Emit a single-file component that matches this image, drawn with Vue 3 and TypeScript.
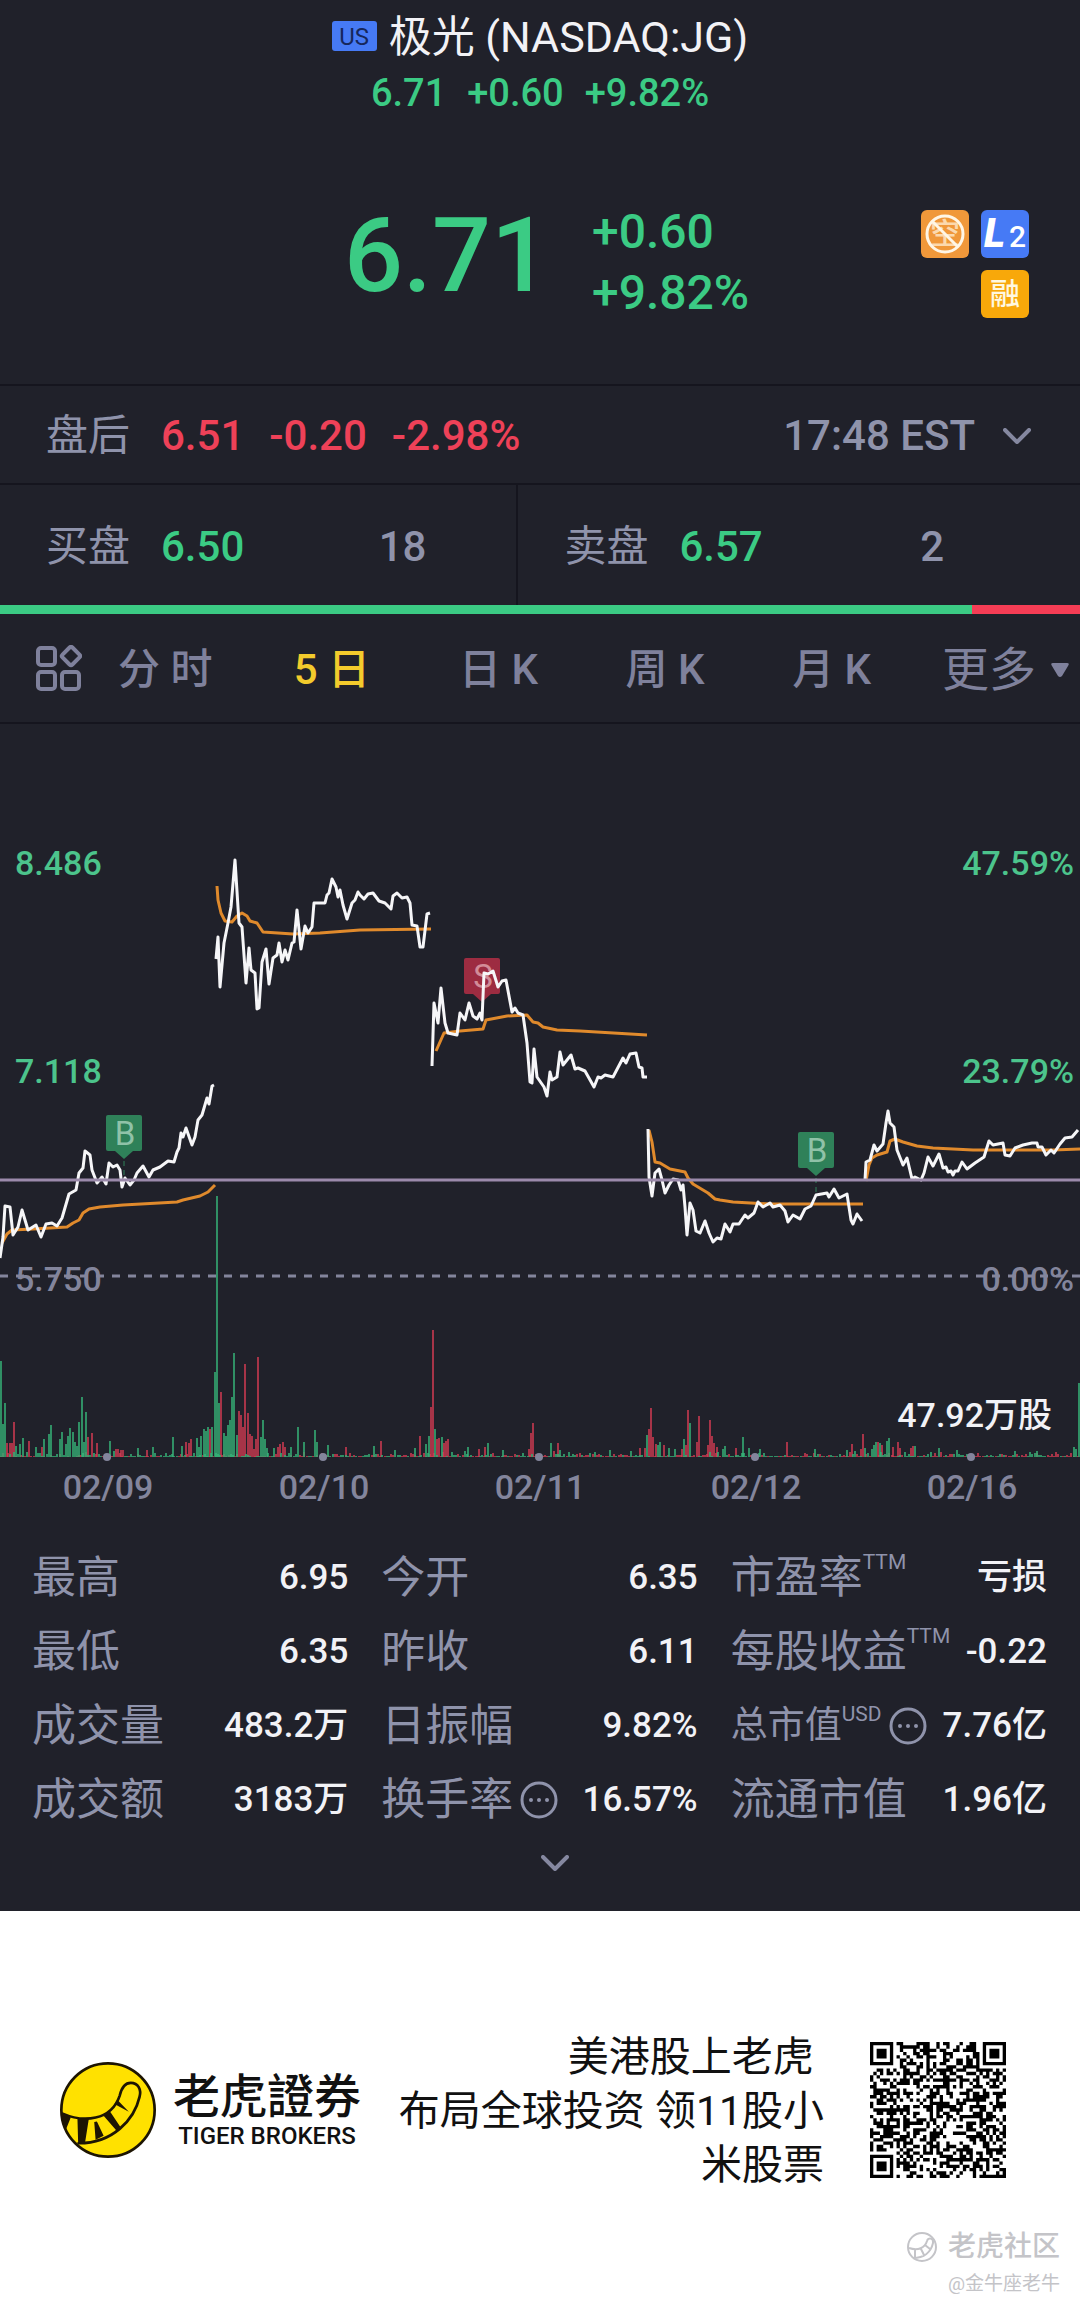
<script setup lang="ts">
type Point = [number, number]
type Tone = 'g' | 'r'

interface Stat {
  label: string
  value: string
  sup?: string
  info?: boolean
  small?: boolean
}

const tabs = ['分 时', '5 日', '日 K', '周 K', '月 K']
const activeTab = '5 日'

const stats: Stat[] = [
  { label: '最高', value: '6.95' },
  { label: '今开', value: '6.35' },
  { label: '市盈率', value: '亏损', sup: 'TTM' },
  { label: '最低', value: '6.35' },
  { label: '昨收', value: '6.11' },
  { label: '每股收益', value: '-0.22', sup: 'TTM' },
  { label: '成交量', value: '483.2万' },
  { label: '日振幅', value: '9.82%' },
  { label: '总市值', value: '7.76亿', sup: 'USD', info: true, small: true },
  { label: '成交额', value: '3183万' },
  { label: '换手率', value: '16.57%', info: true },
  { label: '流通市值', value: '1.96亿' },
]

const days = [
  { date: '02/09', x: 108 },
  { date: '02/10', x: 324 },
  { date: '02/11', x: 540 },
  { date: '02/12', x: 756 },
  { date: '02/16', x: 972 },
]

const priceLines: string[] = [
  '0,1258 3,1237 5,1206 10,1207 13,1235 18,1227 22,1210 28,1230 36,1225 41,1237 46,1224 52,1223 57,1226 62,1218 69,1194 76,1190 79,1173 83,1168 85,1151 90,1155 92,1170 97,1183 102,1177 106,1184 109,1163 113,1167 117,1165 120,1170 122,1187 125,1178 130,1185 134,1180 137,1173 143,1166 149,1177 153,1170 160,1167 168,1161 174,1162 177,1152 179,1148 181,1133 183,1137 186,1128 192,1145 195,1137 198,1120 202,1115 207,1098 209,1104 212,1086 214,1085',
  '216,959 218,937 220,987 224,943 228,923 231,907 235,860 239,923 242,927 246,983 249,948 251,970 255,973 257,1009 259,1008 262,962 266,949 269,984 273,958 277,955 279,943 282,962 285,950 288,960 292,943 294,942 297,910 301,949 305,926 308,933 312,927 314,903 325,903 327,895 329,893 332,879 336,887 338,897 340,890 343,905 347,919 352,903 355,900 358,892 360,895 364,899 368,894 373,893 379,901 385,903 391,909 393,896 397,893 402,898 407,897 410,903 412,925 417,926 420,947 423,947 427,914 430,913',
  '432,1066 434,1003 438,1023 441,988 445,1023 448,1033 457,1035 460,1013 465,1020 469,1003 473,1016 477,1019 480,1013 482,1020 484,973 488,974 493,971 498,987 502,981 506,980 512,1012 515,1008 518,1013 523,1015 527,1043 530,1082 532,1083 534,1049 537,1077 544,1087 547,1096 550,1072 552,1080 557,1077 560,1052 563,1065 571,1055 575,1069 578,1068 585,1071 594,1087 598,1077 601,1078 605,1075 613,1077 623,1058 626,1063 630,1054 636,1053 639,1067 642,1068 643,1077 647,1077',
  '648,1129 649,1177 652,1196 655,1173 659,1169 662,1180 665,1193 669,1185 673,1179 678,1180 681,1190 683,1185 685,1207 687,1235 690,1203 693,1210 696,1231 700,1233 705,1221 709,1233 713,1242 717,1238 721,1239 725,1224 730,1232 733,1224 739,1224 745,1215 748,1218 754,1213 758,1202 763,1207 770,1203 773,1207 780,1205 785,1211 788,1222 793,1215 800,1219 805,1209 811,1206 816,1195 827,1193 829,1197 834,1189 839,1198 847,1194 851,1220 853,1224 857,1214 862,1221',
  '865,1180 866,1162 870,1160 874,1145 877,1151 883,1144 886,1123 888,1111 890,1123 894,1127 897,1150 903,1165 907,1158 912,1179 915,1177 921,1180 924,1173 928,1157 933,1166 939,1154 943,1168 946,1167 948,1172 951,1171 953,1175 955,1171 958,1171 962,1162 967,1169 975,1163 984,1157 989,1141 993,1145 1003,1143 1005,1155 1010,1156 1015,1148 1023,1145 1032,1143 1037,1143 1038,1147 1042,1147 1046,1155 1051,1150 1054,1153 1060,1144 1065,1138 1072,1137 1078,1130',
]

const averageLines: string[] = [
  '2,1243 7,1234 12,1230 33,1229 67,1227 73,1223 79,1220 83,1213 89,1209 100,1207 123,1205 177,1202 183,1200 200,1196 208,1192 215,1185',
  '217,886 218,900 221,913 225,921 232,922 237,916 242,913 247,916 250,921 257,923 263,932 293,934 320,933 360,930 431,929',
  '436,1051 440,1042 444,1033 460,1031 483,1029 486,1020 507,1016 527,1015 533,1022 538,1023 543,1027 557,1030 580,1031 647,1035',
  '649,1130 652,1142 655,1162 660,1163 670,1169 685,1172 688,1178 693,1184 708,1193 715,1199 720,1200 733,1202 770,1204 863,1204',
  '866,1181 869,1165 872,1158 877,1155 887,1152 890,1141 895,1139 903,1142 917,1146 933,1148 973,1150 1053,1150 1080,1149',
]

const markers = [
  { letter: 'B', x: 124, y: 1115, to: 1180, kind: 'buy' },
  { letter: 'S', x: 482, y: 958, to: 1003, kind: 'sell' },
  { letter: 'B', x: 816, y: 1132, to: 1195, kind: 'buy' },
]

const baseline = 1457
const greenBars: Point[] = [
  [1, 95], [3, 32], [5, 53], [16, 10], [20, 12], [23, 18], [36, 9], [44, 17], [49, 22], [51, 31], [60, 17], [62, 24], [66, 12], [68, 20], [70, 28], [73, 24], [75, 14], [77, 10], [79, 34], [82, 59], [84, 14], [86, 44], [110, 15], [138, 8], [153, 9], [173, 19], [182, 10], [197, 18], [199, 9], [201, 20], [204, 27], [206, 25], [208, 29], [212, 29], [215, 84], [217, 260], [219, 53], [224, 23], [226, 20], [228, 31], [230, 36], [232, 59], [234, 103], [237, 21], [261, 19], [263, 36], [265, 17], [267, 8], [274, 8], [291, 9], [298, 29], [304, 14], [315, 26], [317, 14], [328, 11], [374, 10], [395, 6], [415, 8], [426, 12], [429, 20], [435, 27], [442, 19], [468, 9], [488, 13], [503, 6], [551, 13], [560, 6], [610, 6], [631, 5], [647, 21], [658, 11], [660, 14], [669, 8], [675, 7], [684, 17], [690, 33], [723, 7], [725, 10], [743, 19], [749, 8], [760, 7], [815, 7], [847, 6], [865, 8], [872, 7], [874, 11], [876, 14], [880, 13], [887, 15], [889, 18], [915, 10], [939, 8], [957, 6], [1037, 5], [1074, 9], [1076, 7], [1079, 73],
]
const redBars: Point[] = [
  [7, 13], [10, 13], [12, 13], [14, 34], [29, 15], [42, 9], [88, 19], [92, 23], [97, 13], [116, 7], [118, 7], [121, 6], [123, 6], [147, 6], [186, 14], [189, 13], [191, 17], [210, 27], [221, 64], [239, 45], [241, 41], [243, 29], [245, 92], [248, 43], [250, 22], [252, 20], [254, 7], [256, 17], [258, 99], [278, 9], [280, 12], [283, 14], [285, 9], [346, 9], [381, 15], [420, 20], [431, 49], [433, 126], [437, 17], [439, 18], [444, 13], [446, 15], [448, 17], [479, 7], [485, 9], [529, 7], [531, 23], [533, 33], [558, 13], [640, 8], [645, 8], [649, 27], [651, 48], [653, 19], [656, 12], [664, 11], [682, 7], [686, 11], [688, 46], [697, 14], [699, 40], [708, 11], [710, 36], [712, 20], [714, 13], [717, 9], [736, 8], [787, 14], [852, 12], [861, 7], [863, 22], [878, 14], [882, 11], [893, 9], [898, 14], [900, 8], [911, 8], [913, 10],
]

function barPath(bars: Point[]): string {
  return bars.map(([x, h]) => `M${x} ${baseline}V${baseline - h - 1}`).join('')
}

function noise(seed: number): () => number {
  let s = seed
  return () => {
    s = (s * 16807) % 2147483647
    return s / 2147483647
  }
}

// Quiet minutes between the larger trades
const rand = noise(912)
const quiet: Record<Tone, Point[]> = { g: [], r: [] }
for (let i = 0; i < 498; i++) {
  const tone: Tone = rand() > 0.5 ? 'g' : 'r'
  quiet[tone].push([Math.round(i * 2.167) + 1, Math.floor(rand() * rand() * 6)])
}
const greenPath = barPath([...greenBars, ...quiet.g])
const redPath = barPath([...redBars, ...quiet.r])

// QR code grid: three finder squares and the data modules
const qrSize = 41
function finder(x: number, y: number): boolean | null {
  for (const [fx, fy] of [[0, 0], [qrSize - 7, 0], [0, qrSize - 7]]) {
    const dx = x - fx
    const dy = y - fy
    if (dx >= -1 && dx <= 7 && dy >= -1 && dy <= 7) {
      const ring = Math.max(Math.abs(dx - 3), Math.abs(dy - 3))
      return ring === 3 || ring <= 1
    }
  }
  return null
}
const qrRand = noise(7351)
let qrPath = ''
for (let y = 0; y < qrSize; y++) {
  for (let x = 0; x < qrSize; x++) {
    const dark = qrRand() > 0.5
    if (finder(x, y) ?? dark) qrPath += `M${x} ${y}h1v1h-1z`
  }
}
</script>

<template>
  <div class="page">
    <main class="quote">
      <header class="head">
        <h1 class="title"><span class="market">US</span>极光 (NASDAQ:JG)</h1>
        <p class="mini up"><span>6.71</span><span>+0.60</span><span>+9.82%</span></p>
      </header>

      <section class="price">
        <strong class="last up">6.71</strong>
        <p class="change up"><span>+0.60</span><span>+9.82%</span></p>
        <div class="badges">
          <span class="badge noshort">
            <span class="badge-text">空</span>
            <svg viewBox="0 0 48 48" aria-hidden="true">
              <circle cx="24" cy="24" r="18" />
              <path d="M11 11L37 37" />
            </svg>
          </span>
          <span class="badge level"><i>L</i><b>2</b></span>
          <span class="badge margin">融</span>
        </div>
      </section>

      <section class="after">
        <span class="tag">盘后</span>
        <span class="down nums"><span>6.51</span><span>-0.20</span><span>-2.98%</span></span>
        <button class="time" type="button">
          17:48 EST
          <svg class="chev" viewBox="0 0 28 16" aria-hidden="true"><path d="M2 2L14 14L26 2" /></svg>
        </button>
      </section>

      <section class="book">
        <div class="side bid">
          <span class="tag">买盘</span><span class="up">6.50</span><span class="qty">18</span>
        </div>
        <div class="side ask">
          <span class="tag">卖盘</span><span class="up">6.57</span><span class="qty">2</span>
        </div>
      </section>
      <div class="ratio"><span class="ratio-bid"></span><span class="ratio-ask"></span></div>

      <nav class="tabs">
        <button class="grid-btn" type="button" aria-label="图表">
          <svg viewBox="0 0 46 46" aria-hidden="true">
            <rect x="2" y="3" width="17" height="17" rx="3" />
            <rect x="2" y="27" width="17" height="17" rx="3" />
            <rect x="26" y="27" width="17" height="17" rx="3" />
            <rect x="28" y="4" width="14" height="14" rx="2" transform="rotate(45 35 11)" />
          </svg>
        </button>
        <button
          v-for="t in tabs"
          :key="t"
          type="button"
          class="tab"
          :class="{ active: t === activeTab }"
        >{{ t }}</button>
        <button class="more" type="button">
          更多
          <svg viewBox="0 0 20 16" aria-hidden="true"><path d="M3 1H17Q20 1 18 4L12 14Q10 16 8 14L2 4Q0 1 3 1Z" /></svg>
        </button>
      </nav>

      <svg class="chart" viewBox="0 724 1080 806" role="img" aria-label="5日走势">
        <g v-for="m in markers" :key="m.x" :class="m.kind">
          <path class="lead" :d="`M${m.x} ${m.y + 46}V${m.to}`" />
          <rect :x="m.x - 18" :y="m.y" width="36" height="36" rx="2" />
          <path class="tip" :d="`M${m.x - 9} ${m.y + 36}h18l-9 8z`" />
          <text :x="m.x + 1" :y="m.y + 30" text-anchor="middle">{{ m.letter }}</text>
        </g>

        <polyline v-for="(l, i) in averageLines" :key="'a' + i" class="avg" :points="l" />
        <polyline v-for="(l, i) in priceLines" :key="'p' + i" class="line" :points="l" />
        <path class="cost" d="M0 1180H1080" />
        <path class="zero" d="M0 1276H1080" />

        <path class="bars red" :d="redPath" />
        <path class="bars green" :d="greenPath" />

        <g class="axis up-fill">
          <text x="15" y="875">8.486</text>
          <text x="15" y="1083">7.118</text>
          <text x="1074" y="875" text-anchor="end">47.59%</text>
          <text x="1074" y="1083" text-anchor="end">23.79%</text>
        </g>
        <g class="axis muted-fill">
          <text x="15" y="1291">5.750</text>
          <text x="1074" y="1291" text-anchor="end">0.00%</text>
          <template v-for="d in days" :key="d.date">
            <circle :cx="d.x - 1" cy="1457" r="4" />
            <text :x="d.x" y="1499" text-anchor="middle">{{ d.date }}</text>
          </template>
        </g>
        <text class="axis volume" x="1052" y="1427" text-anchor="end">47.92万股</text>
      </svg>

      <dl class="stats">
        <div v-for="s in stats" :key="s.label" class="stat">
          <dt :class="{ small: s.small }">
            {{ s.label }}<sup v-if="s.sup">{{ s.sup }}</sup>
            <svg v-if="s.info" class="info" viewBox="0 0 38 38" aria-hidden="true">
              <circle class="ring" cx="19" cy="19" r="17" />
              <circle cx="11" cy="19" r="2" /><circle cx="19" cy="19" r="2" /><circle cx="27" cy="19" r="2" />
            </svg>
          </dt>
          <dd>{{ s.value }}</dd>
        </div>
      </dl>
      <button class="expand" type="button" aria-label="展开">
        <svg class="chev" viewBox="0 0 28 16" aria-hidden="true"><path d="M2 2L14 14L26 2" /></svg>
      </button>
    </main>

    <footer class="foot">
      <div class="brand">
        <svg class="logo" viewBox="60 122 286 286" aria-hidden="true">
          <circle cx="203" cy="265" r="139" fill="#ffe100" stroke="#1d1503" stroke-width="8" />
          <path d="M66 275C130 303 212 298 238 222C243 200 252 184 271 184C293 184 303 204 297 226C282 292 218 366 112 364" fill="none" stroke="#1d1503" stroke-width="8" />
          <path d="M66 272L92 287L78 322L70 312ZM112 290H146L134 366L114 362ZM162 301L170 299L190 342L166 354ZM188 280L208 268L240 316L228 326ZM222 247L232 236L265 270Z" fill="#1d1503" />
        </svg>
        <p class="brand-text"><strong>老虎證券</strong><span>TIGER BROKERS</span></p>
      </div>
      <p class="slogan">美港股上老虎&nbsp;<br />布局全球投资 领11股小<br />米股票</p>
      <svg class="qr" :viewBox="`0 0 ${qrSize} ${qrSize}`" role="img" aria-label="二维码">
        <path :d="qrPath" />
      </svg>
      <div class="mark">
        <p class="mark-name">
          <svg viewBox="0 0 32 32" aria-hidden="true">
            <circle cx="16" cy="16" r="14" />
            <path d="M3 17C12 20 19 17 21 10C22 6 28 7 27 12C25 21 18 27 7 27M9 19V27M15 18L18 24M19 14L24 18" />
          </svg>
          老虎社区
        </p>
        <p class="mark-user">@金牛座老牛</p>
      </div>
    </footer>
  </div>
</template>

<style>
body {
  margin: 0;
  background: #fff;
}
</style>

<style scoped>
.page {
  font-family: Roboto, "Noto Sans CJK SC", sans-serif;
  line-height: 1.2;
  color: #f2f2f6;
}
p,
h1,
dl,
dd {
  margin: 0;
}
button {
  font: inherit;
  color: inherit;
  background: none;
  border: 0;
  padding: 0;
}
.quote {
  background: #20212a;
}
.up {
  color: #3bcb84;
}
.down {
  color: #ee4158;
}

.head {
  padding-top: 8px;
  text-align: center;
}
.title {
  display: flex;
  justify-content: center;
  align-items: center;
  gap: 12px;
  height: 60px;
  font-size: 43px;
  font-weight: 400;
}
.market {
  width: 45px;
  height: 30px;
  margin-bottom: 4px;
  border-radius: 3px;
  background: #467af5;
  color: #16275c;
  font-size: 24px;
  line-height: 32px;
}
.mini {
  display: flex;
  justify-content: center;
  gap: 21px;
  font-size: 38px;
  font-weight: 500;
  line-height: 50px;
}

.price {
  display: flex;
  align-items: center;
  height: 244px;
  padding: 22px 51px 0 344px;
  border-bottom: 2px solid #15151e;
}
.last {
  width: 248px;
  margin-bottom: 12px;
  font-size: 104px;
  font-weight: 500;
}
.change {
  display: flex;
  flex-direction: column;
  font-size: 48px;
  font-weight: 500;
  line-height: 61px;
}
.badges {
  display: grid;
  grid-template-columns: 48px 48px;
  gap: 12px;
  margin-left: auto;
  padding-top: 4px;
}
.badge {
  position: relative;
  display: flex;
  align-items: center;
  justify-content: center;
  height: 48px;
  border-radius: 6px;
  font-size: 30px;
  font-weight: 500;
}
.noshort {
  background: #f0983a;
}
.badge-text {
  color: #fbd9ae;
}
.noshort svg {
  position: absolute;
  inset: 0;
  fill: none;
  stroke: #fff6e6;
  stroke-width: 3;
}
.level {
  background: #467af5;
  color: #fff;
  gap: 4px;
}
.level i {
  font-size: 40px;
  font-weight: 900;
}
.level b {
  font-size: 30px;
  font-weight: 500;
  padding-top: 6px;
}
.margin {
  grid-column: 2;
  background: #f8a80a;
  color: #fff8e0;
}

.after {
  display: flex;
  align-items: center;
  height: 94px;
  padding: 3px 49px 0 46px;
  border-bottom: 2px solid #15151e;
  font-size: 42px;
}
.tag {
  width: 115px;
  color: #8f93ab;
  font-size: 42px;
}
.nums {
  display: flex;
  gap: 25px;
  font-weight: 500;
}
.time {
  display: flex;
  align-items: center;
  gap: 28px;
  margin-left: auto;
  color: #8f93ab;
  font-weight: 500;
}
.chev {
  width: 28px;
  height: 16px;
  fill: none;
  stroke: #8588a0;
  stroke-width: 4;
  stroke-linecap: round;
  stroke-linejoin: round;
}

.book {
  display: flex;
  height: 120px;
  font-size: 42px;
  font-weight: 500;
}
.side {
  display: flex;
  align-items: center;
  flex: 1;
  padding: 4px 90px 0 46px;
}
.side .tag {
  font-weight: 400;
}
.bid {
  flex: 0 0 48%;
  box-sizing: border-box;
  border-right: 2px solid #15151e;
}
.ask {
  padding-right: 136px;
}
.qty {
  margin-left: auto;
  color: #8f93ab;
}
.ratio {
  display: flex;
  height: 9px;
}
.ratio-bid {
  flex: 90;
  background: #3bcb84;
}
.ratio-ask {
  flex: 10;
  background: #f53d55;
}

.tabs {
  display: flex;
  align-items: center;
  height: 108px;
  padding: 0 10px 0 36px;
  border-bottom: 2px solid #15151e;
  color: #7f819c;
  font-size: 42px;
  font-weight: 500;
}
.grid-btn svg {
  display: block;
  width: 46px;
  height: 46px;
  fill: none;
  stroke: #7f819c;
  stroke-width: 4;
}
.tab {
  flex: 1;
  padding-top: 5px;
}
.tab.active {
  color: #f3cb2c;
}
.more {
  display: flex;
  align-items: center;
  gap: 14px;
  padding: 4px 0 0 27px;
  font-size: 47px;
  font-weight: 400;
}
.more svg {
  width: 20px;
  height: 16px;
  fill: #7f819c;
}

.chart {
  display: block;
  width: 100%;
}
.line,
.avg {
  fill: none;
  stroke-width: 3;
  stroke-linejoin: round;
  stroke: #f6f6f8;
}
.avg {
  stroke: #e08a2c;
}
.cost {
  stroke: #9b8aab;
  stroke-width: 3;
}
.zero {
  stroke: #83859c;
  stroke-width: 3;
  stroke-dasharray: 8 8;
}
.bars {
  stroke-width: 1.6;
  fill: none;
}
.red {
  stroke: #c93a50;
}
.green {
  stroke: #35ac74;
}
.buy,
.sell {
  fill: #2f8159;
  font-size: 33px;
  font-weight: 400;
}
.sell {
  fill: #9d2c41;
}
.buy text {
  fill: #90c2a8;
}
.sell text {
  fill: #d28c98;
}
.lead {
  stroke: #2f8159;
  stroke-width: 1;
  stroke-dasharray: 5 4;
}
.axis {
  font-size: 34px;
  font-weight: 500;
}
.up-fill {
  fill: #4cc48c;
}
.muted-fill {
  fill: #83859c;
}
.volume {
  fill: #f2f2f6;
}

.stats {
  display: grid;
  grid-template-columns: repeat(3, 1fr);
  column-gap: 33px;
  padding: 11px 33px 0 32px;
}
.stat {
  display: flex;
  align-items: center;
  justify-content: space-between;
  height: 74px;
  white-space: nowrap;
}
dt {
  display: flex;
  align-items: center;
  color: #8f93ab;
  font-size: 44px;
}
dt.small {
  font-size: 37px;
}
sup {
  align-self: flex-start;
  font-size: 21px;
  line-height: 20px;
}
.info {
  width: 38px;
  height: 38px;
  margin-left: 7px;
  fill: #8f93ab;
}
.ring {
  fill: none;
  stroke: #8f93ab;
  stroke-width: 3;
}
dd {
  font-size: 35px;
  font-weight: 500;
}
.expand {
  display: flex;
  justify-content: center;
  box-sizing: border-box;
  width: 100%;
  height: 74px;
  padding: 18px 0 0 30px;
}

.foot {
  position: relative;
  display: flex;
  align-items: center;
  height: 397px;
  padding: 0 74px 0 60px;
  color: #111;
}
.brand {
  display: flex;
  align-items: center;
  gap: 17px;
}
.logo {
  width: 96px;
  height: 96px;
}
.brand-text {
  display: flex;
  flex-direction: column;
  align-items: center;
}
.brand-text strong {
  font-family: Roboto, "Noto Sans CJK TC", sans-serif;
  font-size: 47px;
  font-weight: 500;
  line-height: 52px;
}
.brand-text span {
  font-size: 24px;
  font-weight: 500;
  line-height: 26px;
}
.slogan {
  margin-left: auto;
  padding-top: 3px;
  text-align: right;
  font-size: 41px;
  line-height: 54px;
  white-space: nowrap;
}
.qr {
  width: 136px;
  height: 136px;
  margin-left: 46px;
}
.mark {
  position: absolute;
  right: 20px;
  bottom: 7px;
  color: #c4c4c8;
  text-align: right;
}
.mark-name {
  display: flex;
  align-items: center;
  gap: 10px;
  font-size: 28px;
  font-weight: 500;
  line-height: 40px;
}
.mark-name svg {
  width: 32px;
  height: 32px;
  fill: none;
  stroke: #c4c4c8;
  stroke-width: 2;
}
.mark-user {
  font-size: 19px;
  line-height: 34px;
}
</style>
